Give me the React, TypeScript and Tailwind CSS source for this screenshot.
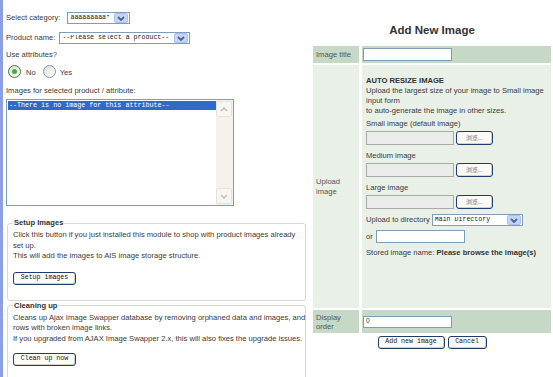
import React from 'react';

// XP-style dropdown: white box, pale blue arrow button
const XpSelect: React.FC<{ value: string; className?: string }> = ({ value, className = '' }) => (
  <div className={`flex items-center h-[12px] border border-[#7f9db9] bg-white ${className}`}>
    <span className="flex-1 pl-[2px] overflow-hidden whitespace-nowrap font-['Liberation_Mono',monospace] text-[6.6px] leading-none text-[#222]">
      {value}
    </span>
    <span className="w-[14px] h-[10px] mr-[1px] rounded-[2px] bg-[#c4d4f9] border border-[#aec1ec] flex items-center justify-center">
      <svg width="8" height="5" viewBox="0 0 8 5">
        <polyline points="1,1 4,4 7,1" fill="none" stroke="#4d6185" strokeWidth="1.8" />
      </svg>
    </span>
  </div>
);

const XpButton: React.FC<{ label: string; className?: string }> = ({ label, className = '' }) => (
  <div
    className={`h-[13px] flex items-center justify-center rounded-[3px] border border-[#1e3d6b] bg-[#fafaf6] shadow-[inset_-1px_-1px_0_#d8d2c2] font-['Liberation_Mono',monospace] text-[6.6px] leading-none text-[#222] ${className}`}
  >
    {label}
  </div>
);

const Radio: React.FC<{ checked?: boolean }> = ({ checked }) => (
  <span
    className={`w-[13px] h-[13px] rounded-full border flex items-center justify-center bg-linear-to-br from-[#dedcd3] to-white ${
      checked ? 'border-[#3d7d3d]' : 'border-[#8296b0]'
    }`}
  >
    {checked && <span className="w-[5px] h-[5px] rounded-full bg-[#3db03d]" />}
  </span>
);

const FileField: React.FC = () => (
  <div className="mt-[2px] flex items-center">
    <div className="w-[88px] h-[14px] bg-[#ebebeb] border border-[#a9a9a9]" />
    <div className="ml-[2px] w-[37px] h-[14px] flex items-center justify-center rounded-[3px] border border-[#1e3d6b] bg-[#fafaf6] shadow-[inset_-1px_-1px_0_#d8d2c2] font-['Noto_Sans_CJK_SC',sans-serif] text-[6px] leading-none text-[#777]">
      浏览...
    </div>
  </div>
);

const TextBox: React.FC<{ value?: string; className?: string }> = ({ value = '', className = '' }) => (
  <div className={`w-[89px] bg-white border border-[#7f9db9] flex items-center pl-[2px] text-[6.5px] leading-none ${className}`}>
    {value}
  </div>
);

const ScrollArrow: React.FC<{ up?: boolean }> = ({ up }) => (
  <div className="w-[16px] h-[16px] rounded-[2px] border border-[#e4e2d9] bg-[#f7f6f2] flex items-center justify-center">
    <svg width="8" height="5" viewBox="0 0 8 5">
      <polyline
        points={up ? '1,4 4,1 7,4' : '1,1 4,4 7,1'}
        fill="none"
        stroke="#c4c1b6"
        strokeWidth="1.6"
      />
    </svg>
  </div>
);

export default function App() {
  return (
    <div className="w-[553px] h-[377px] overflow-hidden bg-white flex border-l-[3px] border-[#8d9fe3] font-['Liberation_Sans',Arial,sans-serif] text-[7.6px] leading-[10px] text-[#3a3a3a]">
      {/* Left column */}
      <div className="w-[307px] shrink-0 pl-[3px] pt-[12px]">
        <div className="flex items-center h-[12px]">
          <span>Select category:</span>
          <XpSelect value="aaaaaaaaa*" className="ml-[7px] w-[63px]" />
        </div>
        <div className="flex items-center h-[12px] mt-[8px]">
          <span>Product name:</span>
          <XpSelect value="--Please select a product--" className="ml-[4px] w-[131px]" />
        </div>
        <div className="mt-[6px]">Use attributes?</div>
        <div className="mt-[4px] h-[14px] flex items-center pl-[2px]">
          <Radio checked />
          <span className="ml-[5px] mt-[3px]">No</span>
          <span className="ml-[7px]">
            <Radio />
          </span>
          <span className="ml-[4px] mt-[3px]">Yes</span>
        </div>
        <div className="mt-[8px]">Images for selected product / attribute:</div>
        <div className="mt-[3px] w-[228px] h-[107px] border border-[#7f9db9] bg-white flex">
          <div className="flex-1 pt-[1px] pl-[1px]">
            <div className="h-[9px] bg-[#316ac5] text-white font-['Liberation_Mono',monospace] text-[6.7px] leading-[9px] pl-[1px] whitespace-nowrap">
              --There is no image for this attribute--
            </div>
          </div>
          <div className="w-[17px] bg-[#f3f2ed] flex flex-col justify-between p-[1px] pl-0">
            <ScrollArrow up />
            <ScrollArrow />
          </div>
        </div>

        <fieldset className="mt-[12px] ml-[1px] w-[299px] min-w-0 border border-[#d8d8cb] rounded-[3px] px-[5px] pt-[2px] pb-[15px]">
          <legend className="px-[1px] font-bold text-[#333]">Setup Images</legend>
          <div className="leading-[10.5px] whitespace-nowrap">
            Click this button if you just installed this module to shop with product images already
            <br />
            set up.
            <br />
            This will add the images to AIS image storage structure.
          </div>
          <XpButton label="Setup images" className="mt-[10px] w-[63px]" />
        </fieldset>

        <fieldset className="ml-[1px] w-[299px] min-w-0 border border-[#d8d8cb] rounded-[3px] px-[5px] pt-[2px] pb-[15px]">
          <legend className="px-[1px] font-bold text-[#333]">Cleaning up</legend>
          <div className="leading-[10.5px] whitespace-nowrap">
            Cleans up Ajax Image Swapper database by removing orphaned data and images, and
            <br />
            rows with broken image links.
            <br />
            If you upgraded from AJAX Image Swapper 2.x, this will also fixes the upgrade issues.
          </div>
          <XpButton label="Clean up now" className="mt-[9px] w-[63px]" />
        </fieldset>
      </div>

      {/* Right column */}
      <div className="flex-1 pl-[3px] pr-[2px] pt-[23px]">
        <div className="text-center font-bold text-[11.5px] leading-[14px] text-[#333]">Add New Image</div>
        <div className="mt-[9px] grid grid-cols-[46px_1fr] gap-x-[3px] gap-y-[2px]">
          <div className="h-[17px] bg-[#c6d9c6] flex items-center pl-[3px] text-[#555]">Image title</div>
          <div className="bg-[#c6d9c6] flex items-center pl-[1px]">
            <TextBox className="h-[13px]" />
          </div>

          <div className="bg-[#e8f0e8] flex items-center pl-[3px] text-[#555]">
            Upload
            <br />
            image
          </div>
          <div className="h-[243px] bg-[#e8f0e8] pl-[4px] pt-[11px]">
            <div className="font-bold text-[#333]">AUTO RESIZE IMAGE</div>
            <div className="whitespace-nowrap">
              Upload the largest size of your image to Small image
              <br />
              input form
              <br />
              to auto-generate the image in other sizes.
            </div>
            <div className="mt-[3px]">Small image (default image)</div>
            <FileField />
            <div className="mt-[6px]">Medium image</div>
            <FileField />
            <div className="mt-[6px]">Large image</div>
            <FileField />
            <div className="mt-[5px] h-[12px] flex items-center">
              <span>Upload to directory</span>
              <XpSelect value="Main Directory" className="ml-[2px] w-[91px]" />
            </div>
            <div className="mt-[4px] h-[13px] flex items-center">
              <span>or</span>
              <TextBox className="ml-[3px] h-[13px]" />
            </div>
            <div className="mt-[5px] whitespace-nowrap">
              Stored image name: <span className="font-bold text-[#333]">Please browse the image(s)</span>
            </div>
          </div>

          <div className="h-[23px] bg-[#c6d9c6] flex items-center pl-[3px] text-[#555] leading-[9px]">
            Display
            <br />
            order
          </div>
          <div className="bg-[#c6d9c6] flex items-center pl-[1px]">
            <TextBox value="0" className="h-[12px]" />
          </div>
        </div>
        <div className="mt-[3px] flex justify-center gap-[3px]">
          <XpButton label="Add new image" className="w-[67px]" />
          <XpButton label="Cancel" className="w-[39px]" />
        </div>
      </div>
    </div>
  );
}
